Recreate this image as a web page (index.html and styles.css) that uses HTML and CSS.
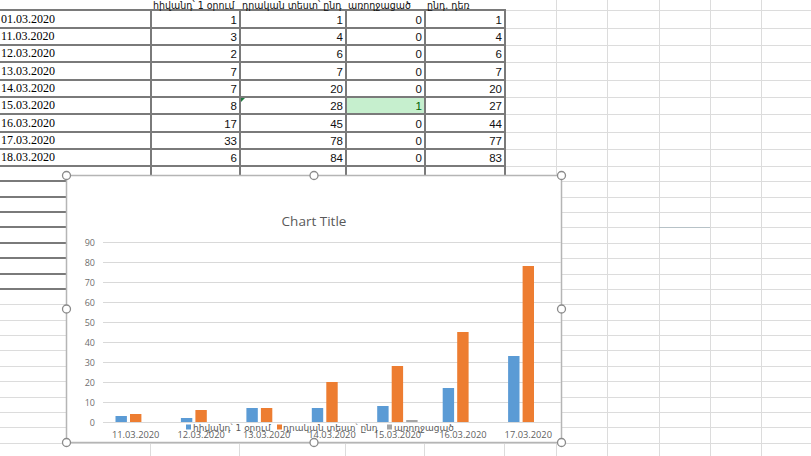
FILE: index.html
```html
<!DOCTYPE html>
<html lang="hy">
<head>
<meta charset="utf-8">
<title>Sheet1</title>
<link rel="stylesheet" href="styles.css">
</head>
<body>
<div class="sheet">
  <div class="grid">
    <!-- header row -->
    <div class="c hd"></div>
    <div class="c hd">հիվանդ՝ 1 օրում</div>
    <div class="c hd">դրական տեստ՝ ընդ</div>
    <div class="c hd">առողջացած</div>
    <div class="c hd">ընդ. դեռ</div>
    <div class="c"></div><div class="c"></div><div class="c"></div><div class="c"></div><div class="c"></div><div class="c"></div>

    <div class="c t date">01.03.2020</div><div class="c t">1</div><div class="c t">1</div><div class="c t">0</div><div class="c t">1</div>
    <div class="c"></div><div class="c"></div><div class="c"></div><div class="c"></div><div class="c"></div><div class="c"></div>

    <div class="c t date">11.03.2020</div><div class="c t">3</div><div class="c t">4</div><div class="c t">0</div><div class="c t">4</div>
    <div class="c"></div><div class="c"></div><div class="c"></div><div class="c"></div><div class="c"></div><div class="c"></div>

    <div class="c t date">12.03.2020</div><div class="c t">2</div><div class="c t">6</div><div class="c t">0</div><div class="c t">6</div>
    <div class="c"></div><div class="c"></div><div class="c"></div><div class="c"></div><div class="c"></div><div class="c"></div>

    <div class="c t date">13.03.2020</div><div class="c t">7</div><div class="c t">7</div><div class="c t">0</div><div class="c t">7</div>
    <div class="c"></div><div class="c"></div><div class="c"></div><div class="c"></div><div class="c"></div><div class="c"></div>

    <div class="c t date">14.03.2020</div><div class="c t">7</div><div class="c t">20</div><div class="c t">0</div><div class="c t">20</div>
    <div class="c"></div><div class="c"></div><div class="c"></div><div class="c"></div><div class="c"></div><div class="c"></div>

    <div class="c t date">15.03.2020</div><div class="c t">8</div><div class="c t flag">28</div><div class="c t good">1</div><div class="c t">27</div>
    <div class="c"></div><div class="c"></div><div class="c"></div><div class="c"></div><div class="c"></div><div class="c"></div>

    <div class="c t date">16.03.2020</div><div class="c t">17</div><div class="c t">45</div><div class="c t">0</div><div class="c t">44</div>
    <div class="c"></div><div class="c"></div><div class="c"></div><div class="c"></div><div class="c"></div><div class="c"></div>

    <div class="c t date">17.03.2020</div><div class="c t">33</div><div class="c t">78</div><div class="c t">0</div><div class="c t">77</div>
    <div class="c"></div><div class="c"></div><div class="c"></div><div class="c"></div><div class="c"></div><div class="c"></div>

    <div class="c t date">18.03.2020</div><div class="c t">6</div><div class="c t">84</div><div class="c t">0</div><div class="c t">83</div>
    <div class="c"></div><div class="c"></div><div class="c"></div><div class="c"></div><div class="c"></div><div class="c"></div>
  </div>

  <!-- empty rows below the data; the bordered range continues for a few rows -->
  <div class="rest">
    <div class="rest-table"></div>
  </div>

  <!-- embedded column chart (selected) -->
  <div class="chart">
    <svg class="chart-svg" width="496" height="268" viewBox="0 0 496 268">
      <rect class="frame" x="0.5" y="0.5" width="495" height="267"/>
      <text class="title" x="248" y="51">Chart Title</text>

      <g class="gridlines">
        <line x1="37" x2="495" y1="67.5" y2="67.5"/>
        <line x1="37" x2="495" y1="87.5" y2="87.5"/>
        <line x1="37" x2="495" y1="107.5" y2="107.5"/>
        <line x1="37" x2="495" y1="127.5" y2="127.5"/>
        <line x1="37" x2="495" y1="147.5" y2="147.5"/>
        <line x1="37" x2="495" y1="167.5" y2="167.5"/>
        <line x1="37" x2="495" y1="187.5" y2="187.5"/>
        <line x1="37" x2="495" y1="207.5" y2="207.5"/>
        <line x1="37" x2="495" y1="227.5" y2="227.5"/>
        <line x1="37" x2="495" y1="247.5" y2="247.5"/>
      </g>

      <g class="axis">
        <text x="29" y="70.5">90</text>
        <text x="29" y="90.5">80</text>
        <text x="29" y="110.5">70</text>
        <text x="29" y="130.5">60</text>
        <text x="29" y="150.5">50</text>
        <text x="29" y="170.5">40</text>
        <text x="29" y="190.5">30</text>
        <text x="29" y="210.5">20</text>
        <text x="29" y="230.5">10</text>
        <text x="29" y="250.5">0</text>
      </g>

      <g class="s1">
        <rect x="49.5" y="241" width="11.4" height="6"/>
        <rect x="114.9" y="243" width="11.4" height="4"/>
        <rect x="180.4" y="233" width="11.4" height="14"/>
        <rect x="245.8" y="233" width="11.4" height="14"/>
        <rect x="311.2" y="231" width="11.4" height="16"/>
        <rect x="376.7" y="213" width="11.4" height="34"/>
        <rect x="442.1" y="181" width="11.4" height="66"/>
      </g>
      <g class="s2">
        <rect x="64" y="239" width="11.4" height="8"/>
        <rect x="129.4" y="235" width="11.4" height="12"/>
        <rect x="194.9" y="233" width="11.4" height="14"/>
        <rect x="260.3" y="207" width="11.4" height="40"/>
        <rect x="325.7" y="191" width="11.4" height="56"/>
        <rect x="391.2" y="157" width="11.4" height="90"/>
        <rect x="456.6" y="91" width="11.4" height="156"/>
      </g>
      <g class="s3">
        <rect x="340.2" y="245" width="11.4" height="2"/>
      </g>

      <g class="cats">
        <text x="69.7" y="263">11.03.2020</text>
        <text x="135.1" y="263">12.03.2020</text>
        <text x="200.6" y="263">13.03.2020</text>
        <text x="266" y="263">14.03.2020</text>
        <text x="331.4" y="263">15.03.2020</text>
        <text x="396.9" y="263">16.03.2020</text>
        <text x="462.3" y="263">17.03.2020</text>
      </g>

      <g class="legend">
        <rect class="k1" x="120" y="249.5" width="5" height="5"/>
        <text x="127" y="255.5">հիվանդ՝ 1 օրում</text>
        <rect class="k2" x="211" y="249.5" width="5" height="5"/>
        <text x="217" y="255.5">դրական տեստ՝ ընդ</text>
        <rect class="k3" x="321" y="249.5" width="5" height="5"/>
        <text x="328" y="255.5">առողջացած</text>
      </g>

      <g class="handles">
        <circle cx="0.5" cy="0.5" r="4"/>
        <circle cx="248" cy="0.5" r="4"/>
        <circle cx="495.5" cy="0.5" r="4"/>
        <circle cx="0.5" cy="134" r="4"/>
        <circle cx="495.5" cy="134" r="4"/>
        <circle cx="0.5" cy="267.5" r="4"/>
        <circle cx="248" cy="267.5" r="4"/>
        <circle cx="495.5" cy="267.5" r="4"/>
      </g>
    </svg>
  </div>
</div>
</body>
</html>
```

FILE: styles.css
```css
* {
  box-sizing: border-box;
  margin: 0;
  padding: 0;
}

html,
body {
  width: 811px;
  height: 456px;
  overflow: hidden;
  background: #fff;
}

.sheet {
  position: relative;
  width: 811px;
  height: 456px;
  overflow: hidden;
  color: #111;
}

/* worksheet cells */
.grid {
  display: grid;
  grid-template-columns: 152px 89px 106px 79px 80px 51px 51px 52px 51px 51px 51px;
  grid-template-rows: 11px 18px 17px 17px 18px 17px 17px 18px 17px 17px;
  width: 813px;
}

.c {
  border-right: 1px solid #dcdcdc;
  border-bottom: 1px solid #dcdcdc;
}

.hd {
  border-right: 0;
  border-bottom: 2px solid #7a7a7a;
  display: flex;
  align-items: flex-end;
  padding-left: 1px;
  white-space: nowrap;
  font-family: "DejaVu Sans Condensed", "DejaVu Sans", sans-serif;
  font-stretch: condensed;
  font-size: 10.5px;
  line-height: 8px;
}

.t {
  border-right: 2px solid #7a7a7a;
  border-bottom: 2px solid #7a7a7a;
  display: flex;
  align-items: flex-end;
  justify-content: flex-end;
  padding-right: 2px;
  font: 11.5px/14px "Liberation Sans", sans-serif;
}

.t.date {
  justify-content: flex-start;
  padding: 0 0 1px 1px;
  font: 12px/14px "Liberation Serif", serif;
  color: #000;
}

.t.good {
  background: #c6efce;
  color: #006100;
}

/* error indicator in the corner of a cell */
.t.flag {
  position: relative;
}

.t.flag::before {
  content: "";
  position: absolute;
  left: 0;
  top: 0;
  border-top: 4px solid #1f7a3f;
  border-right: 4px solid transparent;
}

/* empty rows: light gridlines */
.rest {
  width: 811px;
  height: 289px;
  background:
    linear-gradient(#b7c2c7, #b7c2c7) 659px 60px / 51px 1px no-repeat,
    linear-gradient(#dcdcdc, #dcdcdc) 150px 0 / 1px 100% no-repeat,
    linear-gradient(#dcdcdc, #dcdcdc) 239px 0 / 1px 100% no-repeat,
    linear-gradient(#dcdcdc, #dcdcdc) 345px 0 / 1px 100% no-repeat,
    linear-gradient(#dcdcdc, #dcdcdc) 424px 0 / 1px 100% no-repeat,
    linear-gradient(#dcdcdc, #dcdcdc) 504px 0 / 1px 100% no-repeat,
    linear-gradient(#dcdcdc, #dcdcdc) 556px 0 / 1px 100% no-repeat,
    linear-gradient(#dcdcdc, #dcdcdc) 607px 0 / 1px 100% no-repeat,
    linear-gradient(#dcdcdc, #dcdcdc) 659px 0 / 1px 100% no-repeat,
    linear-gradient(#dcdcdc, #dcdcdc) 710px 0 / 1px 100% no-repeat,
    linear-gradient(#dcdcdc, #dcdcdc) 761px 0 / 1px 100% no-repeat,
    repeating-linear-gradient(to bottom, transparent 0 14.37px, #dcdcdc 14.37px 15.37px);
}

/* bordered range continuing under the chart */
.rest-table {
  width: 506px;
  height: 123px;
  background:
    linear-gradient(#7a7a7a, #7a7a7a) 150px 0 / 2px 100% no-repeat,
    linear-gradient(#7a7a7a, #7a7a7a) 239px 0 / 2px 100% no-repeat,
    linear-gradient(#7a7a7a, #7a7a7a) 345px 0 / 2px 100% no-repeat,
    linear-gradient(#7a7a7a, #7a7a7a) 424px 0 / 2px 100% no-repeat,
    linear-gradient(#7a7a7a, #7a7a7a) 504px 0 / 2px 100% no-repeat,
    repeating-linear-gradient(to bottom, transparent 0 13.37px, #7a7a7a 13.37px 15.37px);
}

/* chart object floating over the sheet */
.chart {
  position: absolute;
  left: 66px;
  top: 175px;
  width: 496px;
  height: 268px;
}

.chart-svg {
  display: block;
  overflow: visible;
  font-family: "Open Sans", "DejaVu Sans", sans-serif;
}

.frame {
  fill: #fff;
  stroke: #b5b5b5;
  stroke-width: 1.5;
}

.title {
  font-size: 13.5px;
  fill: #595959;
  text-anchor: middle;
}

.gridlines line {
  stroke: #d9d9d9;
  stroke-width: 1;
}

.axis text {
  font-size: 9px;
  fill: #6e6e6e;
  text-anchor: end;
}

.s1 rect,
.k1 {
  fill: #5b9bd5;
}

.s2 rect,
.k2 {
  fill: #ed7d31;
}

.s3 rect,
.k3 {
  fill: #a5a5a5;
}

.cats text {
  font-size: 9.3px;
  fill: #5f5f5f;
  text-anchor: middle;
}

.legend text {
  font-family: "DejaVu Sans", sans-serif;
  font-size: 9px;
  fill: #595959;
}

.handles circle {
  fill: #fff;
  stroke: #8a8a8a;
  stroke-width: 1.3;
}
```
